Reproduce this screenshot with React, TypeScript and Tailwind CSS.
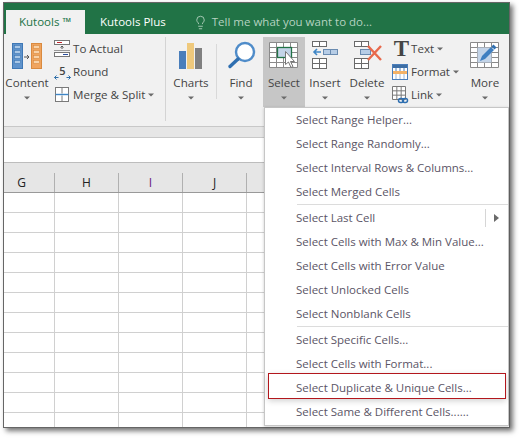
import type { ReactNode } from "react";
import { Lightbulb } from "lucide-react";

const FONT = "font-['Open_Sans','Noto_Sans',sans-serif]";

const Caret = ({ className = "" }: { className?: string }) => (
  <svg width="6" height="4" viewBox="0 0 6 4" className={className}>
    <path d="M0 0.5h6L3 3.5z" fill="#6a6a6a" />
  </svg>
);

const cellGrid = (x: number, y: number, w: number, h: number, cols: number, rows: number, stroke = "#8a8a8a") => {
  const lines = [];
  for (let i = 0; i <= cols; i++) lines.push(<line key={"c" + i} x1={x + (w * i) / cols} x2={x + (w * i) / cols} y1={y} y2={y + h} stroke={stroke} />);
  for (let i = 0; i <= rows; i++) lines.push(<line key={"r" + i} x1={x} x2={x + w} y1={y + (h * i) / rows} y2={y + (h * i) / rows} stroke={stroke} />);
  return lines;
};

const Stack = ({ x, fill, edge, cell }: { x: number; fill: string; edge: string; cell: string }) => (
  <g>
    <rect x={x + 0.5} y="0.5" width="10" height="25" fill={fill} stroke={edge} />
    {[3, 8, 13, 18].map((y) => (
      <rect key={y} x={x + 2.5} y={y - 0.5} width="6" height="3" fill={cell} stroke={edge} strokeWidth="0.6" />
    ))}
  </g>
);

const ContentIcon = () => (
  <svg width="32" height="26" viewBox="0 0 32 26" className="ml-[1px]">
    <Stack x={0} fill="#5f93cc" edge="#3f78b5" cell="#a9c7e6" />
    <Stack x={19} fill="#f0a45e" edge="#d98a3f" cell="#f8d2a8" />
    <path d="M12 14h5M15 12l2 2-2 2" stroke="#555" fill="none" />
  </svg>
);

const ChartsIcon = () => (
  <svg width="24" height="26" viewBox="0 0 24 26">
    <rect x="0" y="8" width="7" height="18" fill="#4a7ebb" />
    <rect x="8" y="0" width="7" height="26" fill="#efc97c" />
    <rect x="16" y="5" width="7" height="21" fill="#808080" />
  </svg>
);

const FindIcon = () => (
  <svg width="30" height="28" viewBox="0 0 30 28">
    <circle cx="19" cy="11" r="9" fill="#fff" stroke="#4f8cc9" strokeWidth="2.4" />
    <path d="M12 18L4 25.5" stroke="#2f6fb0" strokeWidth="3.4" strokeLinecap="round" />
  </svg>
);

const SelectIcon = () => (
  <svg width="30" height="27" viewBox="0 0 30 27">
    <rect x="0.5" y="0.5" width="28" height="25" fill="#fff" />
    {cellGrid(0.5, 0.5, 28, 25, 4, 5)}
    <rect x="8.5" y="5.5" width="14" height="10" fill="#c3d4e8" stroke="#217346" strokeWidth="1.3" />
    <path d="M16.5 9.5v13l3-2.5 2.5 5.5 2-1-2.5-5h4z" fill="#fff" stroke="#777" />
  </svg>
);

const InsertIcon = () => (
  <svg width="26" height="28" viewBox="0 0 26 28">
    <g fill="#fff" stroke="#6a6a6a">
      <rect x="0.5" y="0.5" width="7" height="5" />
      <rect x="7.5" y="0.5" width="7" height="5" />
      <rect x="0.5" y="17.5" width="7" height="5" />
      <rect x="7.5" y="17.5" width="7" height="5" />
      <rect x="0.5" y="22.5" width="7" height="5" />
      <rect x="7.5" y="22.5" width="7" height="5" />
    </g>
    <g fill="#b7cde6" stroke="#6a8bb0">
      <rect x="11.5" y="8.5" width="7" height="5" />
      <rect x="18.5" y="8.5" width="7" height="5" />
    </g>
    <path d="M2 11h7M5 8l-3 3 3 3" stroke="#3f86c6" strokeWidth="1.6" fill="none" />
  </svg>
);

const DeleteIcon = () => (
  <svg width="30" height="28" viewBox="0 0 30 28">
    <g fill="#fff" stroke="#6a6a6a">
      <rect x="2.5" y="0.5" width="7" height="5" />
      <rect x="9.5" y="0.5" width="7" height="5" />
      <rect x="2.5" y="17.5" width="7" height="5" />
      <rect x="9.5" y="17.5" width="7" height="5" />
      <rect x="2.5" y="22.5" width="7" height="5" />
      <rect x="9.5" y="22.5" width="7" height="5" />
    </g>
    <rect x="8.5" y="8.5" width="10" height="5" fill="#b7cde6" stroke="#6a8bb0" />
    <path d="M16 5l13 14M29 5L16 19" stroke="#e8694c" strokeWidth="2.4" />
  </svg>
);

const MoreIcon = () => (
  <svg width="30" height="27" viewBox="0 0 30 27">
    <rect x="0.5" y="0.5" width="28" height="25" fill="#fff" />
    {cellGrid(0.5, 0.5, 28, 25, 4, 5)}
    <rect x="7.5" y="5.5" width="14" height="15" fill="#c3d4e8" />
    <path d="M10 19l2-5 9-9 3 3-9 9z" fill="#3f7fc0" />
    <path d="M21.5 4.5l2-2 3 3-2 2z" fill="#2f6fb0" />
  </svg>
);

const ToActualIcon = () => (
  <svg width="16" height="17" viewBox="0 0 16 17">
    <rect x="0.5" y="0.5" width="15" height="4" fill="#fff" stroke="#777" />
    <path d="M3 2.5h5" stroke="#c0272d" />
    <path d="M8 6v3M6.5 7.5L8 6l1.5 1.5" stroke="#555" fill="none" />
    <path d="M0 10.5h16" stroke="#999" />
    <rect x="0.5" y="12.5" width="15" height="4" fill="#fff" stroke="#777" />
    <path d="M9 14.5h5" stroke="#2b4f9e" />
  </svg>
);

const RoundIcon = () => (
  <svg width="17" height="20" viewBox="0 -4 17 20">
    <text x="8.5" y="9" textAnchor="middle" fontSize="11" fontWeight="600" fill="#444" fontFamily="Open Sans">5</text>
    <path d="M0.5 11.5h4M2.5 9.5l-2 2 2 2" stroke="#2f6fa8" fill="none" />
    <path d="M12.5 11.5h4M14.5 9.5l2 2-2 2" stroke="#2f6fa8" fill="none" />
  </svg>
);

const MergeIcon = () => (
  <svg width="14" height="15" viewBox="0 0 14 15" className="ml-[1px]">
    <rect x="0.5" y="0.5" width="13" height="14" fill="#fff" stroke="#7a7a7a" />
    <path d="M7 0.5v6M7 8.5v6" stroke="#7a7a7a" />
    <path d="M0.5 7.5h13" stroke="#3f86c6" strokeWidth="1.4" />
  </svg>
);

const TextIcon = () => (
  <span className="ml-[1px] flex h-[16px] w-[17px] items-center justify-center font-['Liberation_Serif',serif] text-[23px] leading-none font-bold text-[#444]">
    T
  </span>
);

const FormatIcon = () => (
  <svg width="16" height="16" viewBox="0 0 16 16">
    <rect x="0.5" y="0.5" width="15" height="15" fill="#fff" stroke="#4a7ebb" />
    <rect x="1" y="1" width="14" height="3" fill="#3d6ea5" />
    <path d="M4 4v3M8 4v3M12 4v3" stroke="#4a7ebb" />
    <rect x="1" y="7" width="14" height="3" fill="#f4b266" />
    <path d="M4 10v5M8 10v5M12 10v5" stroke="#9db8d8" />
  </svg>
);

const LinkIcon = () => (
  <svg width="17" height="18" viewBox="0 0 17 18">
    <rect x="0.5" y="0.5" width="13" height="13" fill="#fff" />
    {cellGrid(0.5, 0.5, 13, 13, 3, 3, "#7a7a7a")}
    <rect x="6.5" y="12.5" width="5" height="4" rx="2" fill="none" stroke="#2f6fb0" strokeWidth="1.5" />
    <rect x="10.5" y="12.5" width="5" height="4" rx="2" fill="none" stroke="#2f6fb0" strokeWidth="1.5" />
  </svg>
);

function BigButton({ label, icon, width, active }: { label: string; icon: ReactNode; width: string; active?: boolean }) {
  return (
    <div className={`flex h-[70px] flex-col items-center ${width} ${active ? "bg-[#c6c6c6]" : ""}`}>
      <div className="flex h-[32px] items-end justify-center">{icon}</div>
      <div className="mt-[5px] text-[11.6px] leading-[18px] whitespace-nowrap text-[#444]">{label}</div>
      <Caret className="mt-[4px]" />
    </div>
  );
}

function SmallRow({ icon, label, caret }: { icon: ReactNode; label: string; caret?: boolean }) {
  return (
    <div className="flex h-[23px] items-center">
      <div className="flex w-[19px] shrink-0 items-center justify-start">{icon}</div>
      <span className="text-[11.6px] whitespace-nowrap text-[#444]">{label}</span>
      {caret && <Caret className="ml-[3px]" />}
    </div>
  );
}

const group1 = ["Select Range Helper...", "Select Range Randomly...", "Select Interval Rows & Columns...", "Select Merged Cells"];
const group2 = ["Select Last Cell", "Select Cells with Max & Min Value...", "Select Cells with Error Value", "Select Unlocked Cells", "Select Nonblank Cells"];
const group3 = ["Select Specific Cells...", "Select Cells with Format...", "Select Duplicate & Unique Cells...", "Select Same & Different Cells......"];

function MenuItem({ label }: { label: string }) {
  return (
    <div className="relative flex h-[24px] items-center pl-[31px] text-[11.5px] whitespace-nowrap text-[#5b5566]">
      {label}
      {label === "Select Last Cell" && (
        <div className="absolute top-[3px] left-[220px] flex h-[18px] items-center border-l border-[#d6d6d6] pl-[8px]">
          <svg width="5" height="8" viewBox="0 0 5 8">
            <path d="M0 0l5 4-5 4z" fill="#6a6a6a" />
          </svg>
        </div>
      )}
      {label === "Select Duplicate & Unique Cells..." && (
        <div className="absolute top-[-3px] left-[3px] h-[26px] w-[238px] border border-[#b3171d] shadow-[0_2px_6px_rgba(0,0,0,0.18)]" />
      )}
    </div>
  );
}

const MenuSeparator = () => <div className="ml-[32px] h-[2px] border-t border-[#dcdcdc]" />;

const cols = [
  { label: "G", cls: "w-[51px] pr-[15px]" },
  { label: "H", cls: "w-[64px]" },
  { label: "I", cls: "w-[64px] text-[#6b1a7a]" },
  { label: "J", cls: "w-[64px]" },
  { label: "", cls: "flex-1" },
];

export default function App() {
  return (
    <div className={`h-[438px] w-[519px] overflow-hidden bg-white pt-[2px] pl-[3px] ${FONT}`}>
      <div className="relative flex h-[426px] w-[507px] flex-col border border-[#666] bg-white shadow-[3px_3px_5px_rgba(0,0,0,0.55)]">
        {/* tabs */}
        <div className="flex h-[31px] items-end bg-[#217346] pl-[2px] text-[11.5px]">
          <div className="flex h-[24px] w-[79px] items-center bg-[#f1f1f1] pl-[13px] whitespace-nowrap text-[#217346]">Kutools ™</div>
          <div className="ml-[15px] flex h-[24px] items-center whitespace-nowrap text-white">Kutools Plus</div>
          <div className="ml-[27px] flex h-[24px] items-center whitespace-nowrap text-[#b5d2c0]">
            <Lightbulb size={15} strokeWidth={1.4} className="mr-[4px]" />
            Tell me what you want to do...
          </div>
        </div>

        {/* ribbon */}
        <div className="flex h-[92px] bg-[#f1f1f1] pt-[3px]">
          <BigButton label="Content" icon={<ContentIcon />} width="ml-[1px] w-[44px]" />
          <div className="ml-[5px] flex w-[111px] flex-col">
            <SmallRow icon={<ToActualIcon />} label="To Actual" />
            <SmallRow icon={<RoundIcon />} label="Round" />
            <SmallRow icon={<MergeIcon />} label="Merge & Split" caret />
          </div>
          <div className="h-[84px] w-px bg-[#d4d4d4]" />
          <BigButton label="Charts" icon={<ChartsIcon />} width="ml-[2px] w-[46px]" />
          <div className="mt-[7px] ml-[2px] h-[55px] w-px bg-[#d9d9d9]" />
          <BigButton label="Find" icon={<FindIcon />} width="ml-[4px] w-[40px]" />
          <BigButton label="Select" icon={<SelectIcon />} width="ml-[2px] w-[42px]" active />
          <BigButton label="Insert" icon={<InsertIcon />} width="w-[40px]" />
          <BigButton label="Delete" icon={<DeleteIcon />} width="ml-[2px] w-[40px]" />
          <div className="ml-[5px] flex w-[73px] flex-col">
            <SmallRow icon={<TextIcon />} label="Text" caret />
            <SmallRow icon={<FormatIcon />} label="Format" caret />
            <SmallRow icon={<LinkIcon />} label="Link" caret />
          </div>
          <BigButton label="More" icon={<MoreIcon />} width="w-[40px]" />
        </div>

        {/* band under the ribbon and formula bar */}
        <div className="h-[12px] border-y border-[#c8c8c8] bg-[#e6e6e6]" />
        <div className="h-[25px] border-b border-[#bdbdbd] bg-white" />

        {/* column headers */}
        <div className="flex h-[30px] items-end border-b border-[#999] bg-[#e6e6e6] text-[12px] text-[#222]">
          {cols.map((c, i) => (
            <div key={i} className={`flex h-[19px] items-center justify-center ${c.label ? "border-r border-[#b0b0b0]" : ""} ${c.cls}`}>
              {c.label}
            </div>
          ))}
        </div>

        {/* sheet */}
        <div className="flex flex-1 flex-col overflow-hidden">
          {Array.from({ length: 12 }).map((_, r) => (
            <div key={r} className={`flex ${r === 11 ? "flex-1" : "h-[20px] border-b border-[#d0d0d0]"}`}>
              <div className="w-[51px] border-r border-[#d0d0d0]" />
              <div className="w-[64px] border-r border-[#d0d0d0]" />
              <div className="w-[64px] border-r border-[#d0d0d0]" />
              <div className="w-[64px] border-r border-[#d0d0d0]" />
            </div>
          ))}
        </div>

        {/* dropdown menu */}
        <div className="absolute top-[104px] left-[260px] h-[319px] w-[245px] border border-[#c6c6c6] bg-white shadow-[0_1px_3px_rgba(0,0,0,0.2)]">
          {group1.map((l) => <MenuItem key={l} label={l} />)}
          <MenuSeparator />
          {group2.map((l) => <MenuItem key={l} label={l} />)}
          <MenuSeparator />
          {group3.map((l) => <MenuItem key={l} label={l} />)}
        </div>
      </div>
    </div>
  );
}
